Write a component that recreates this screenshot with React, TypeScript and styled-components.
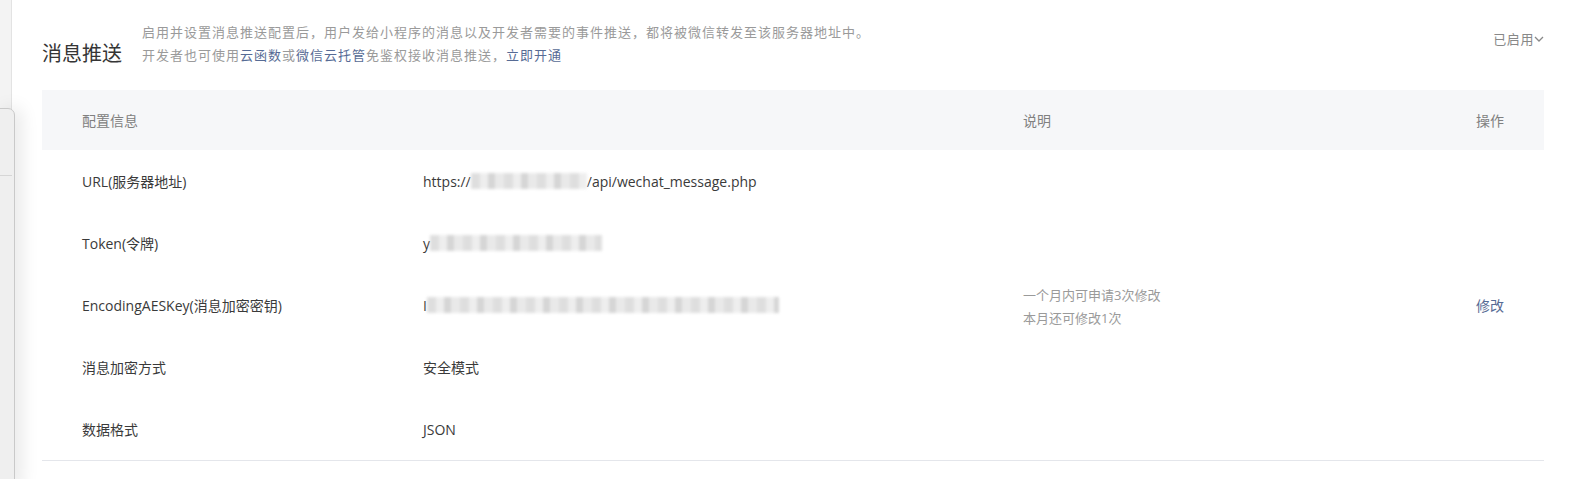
import styled, { createGlobalStyle } from 'styled-components'

const GlobalStyle = createGlobalStyle`
    html, body {
        margin: 0;
        padding: 0;
        background: #fff;
    }
    body {
        font-family: 'Open Sans', 'Noto Sans CJK SC', sans-serif;
        color: #3a3a3a;
    }
`

const Page = styled.div`
    position: relative;
    display: flex;
    width: 1575px;
    height: 479px;
    overflow: hidden;
`

const SideStrip = styled.div`
    width: 11px;
    flex-shrink: 0;
    background: #f3f3f3;
    border-right: 1px solid #e3e3e3;
`

// drawer edge that lies over the page at the left
const Drawer = styled.div`
    position: absolute;
    top: 108px;
    left: -2px;
    width: 15px;
    bottom: -10px;
    background: #efefef;
    border: 1px solid #c9c9c9;
    border-top-right-radius: 7px;
    box-shadow: 6px 0 18px rgba(0, 0, 0, 0.1);
`

const DrawerLine = styled.div`
    margin-top: 66px;
    height: 1px;
    width: 13px;
    background: #d6d6d6;
`

const Main = styled.div`
    flex: 1;
    padding: 21px 31px 0 30px;
`

const Head = styled.div`
    display: flex;
    align-items: flex-end;
`

const Title = styled.h2`
    margin: 0;
    font-size: 20px;
    font-weight: 400;
    line-height: 26px;
    color: #353535;
    width: 100px;
    flex-shrink: 0;
`

const Desc = styled.div`
    font-size: 13px;
    line-height: 23px;
    color: #9a9a9a;
    letter-spacing: 1px;
`

const Link = styled.a`
    color: #576b95;
    text-decoration: none;
`

const Status = styled.div`
    margin-left: auto;
    align-self: flex-start;
    margin-top: 8px;
    display: flex;
    align-items: center;
    font-size: 13px;
    color: #888;
    letter-spacing: 0.6px;
`

const Table = styled.div`
    margin-top: 23px;
    border-bottom: 1px solid #e4e6eb;
`

const Row = styled.div<{ $header?: boolean }>`
    display: grid;
    grid-template-columns: 341px 600px 1fr 80px;
    align-items: center;
    height: ${p => (p.$header ? 60 : 62)}px;
    padding: 0 40px;
    background: ${p => (p.$header ? '#f6f7f9' : 'transparent')};
    font-size: 14px;
    color: ${p => (p.$header ? '#808080' : '#3a3a3a')};
`

const Cell = styled.div<{ $right?: boolean }>`
    display: flex;
    align-items: center;
    justify-content: ${p => (p.$right ? 'flex-end' : 'flex-start')};
    white-space: nowrap;
`

const Note = styled.div`
    margin-top: 3px;
    font-size: 13px;
    line-height: 23px;
    color: #9a9a9a;
`

const Masked = styled.span<{ $w: number }>`
    display: inline-block;
    width: ${p => p.$w}px;
    height: 16px;
    background: repeating-linear-gradient(90deg, #d9d9d9 0 9px, #ececec 9px 17px, #cfcfcf 17px 24px, #e6e6e6 24px 33px);
    filter: blur(1.5px);
    opacity: 0.85;
`

const Chevron = () => (
    <svg width="10" height="8" viewBox="0 0 10 8">
        <path d="M1 2 L5 6 L9 2" fill="none" stroke="#888" strokeWidth="1.3" />
    </svg>
)

const rows = [
    { label: 'URL(服务器地址)', value: <>https://<Masked $w={116} />/api/wechat_message.php</> },
    { label: 'Token(令牌)', value: <>y<Masked $w={172} /></> },
    {
        label: 'EncodingAESKey(消息加密密钥)',
        value: <>I<Masked $w={352} /></>,
        note: ['一个月内可申请3次修改', '本月还可修改1次'],
        op: '修改',
    },
    { label: '消息加密方式', value: '安全模式' },
    { label: '数据格式', value: 'JSON' },
]

export default function App() {
    return (
        <Page>
            <GlobalStyle />
            <SideStrip />
            <Main>
                <Head>
                    <Title>消息推送</Title>
                    <Desc>
                        <div>启用并设置消息推送配置后，用户发给小程序的消息以及开发者需要的事件推送，都将被微信转发至该服务器地址中。</div>
                        <div>
                            开发者也可使用<Link>云函数</Link>或<Link>微信云托管</Link>免鉴权接收消息推送，<Link>立即开通</Link>
                        </div>
                    </Desc>
                    <Status>
                        已启用
                        <Chevron />
                    </Status>
                </Head>
                <Table>
                    <Row $header>
                        <Cell>配置信息</Cell>
                        <Cell />
                        <Cell>说明</Cell>
                        <Cell $right>操作</Cell>
                    </Row>
                    {rows.map(r => (
                        <Row key={r.label}>
                            <Cell>{r.label}</Cell>
                            <Cell>{r.value}</Cell>
                            <Cell>
                                {r.note && (
                                    <Note>
                                        {r.note.map(n => <div key={n}>{n}</div>)}
                                    </Note>
                                )}
                            </Cell>
                            <Cell $right>{r.op && <Link>{r.op}</Link>}</Cell>
                        </Row>
                    ))}
                </Table>
            </Main>
            <Drawer>
                <DrawerLine />
            </Drawer>
        </Page>
    )
}
